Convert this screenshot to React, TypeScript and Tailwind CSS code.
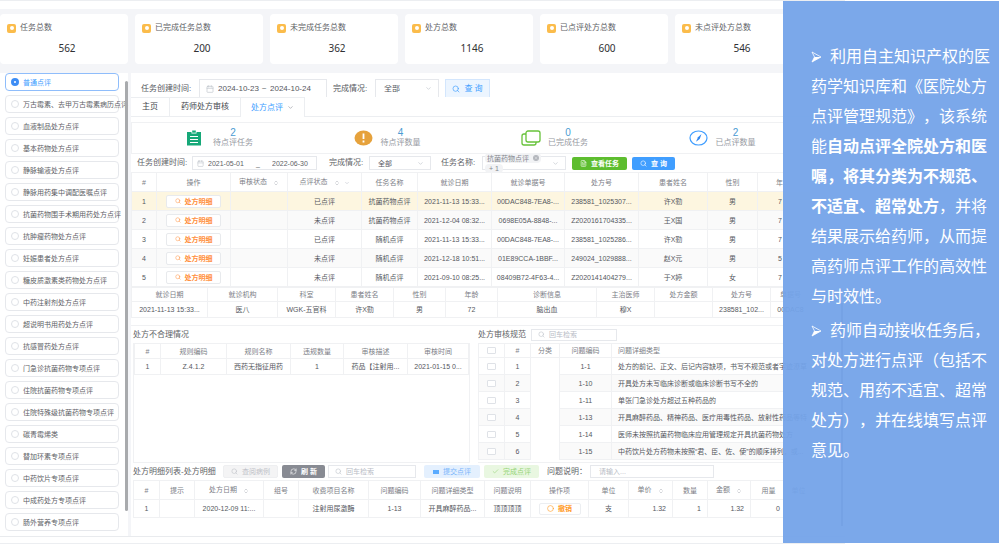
import { useState } from "react";
import type { ReactNode } from "react";
import clsx from "clsx";
import { Calendar, Check, ChevronDown, ChevronsUpDown, Circle, FileText, RefreshCw, Search, X } from "lucide-react";

const totals = [
  { label: "任务总数", value: 562 },
  { label: "已完成任务总数", value: 200 },
  { label: "未完成任务总数", value: 362 },
  { label: "处方总数", value: 1146 },
  { label: "已点评处方总数", value: 600 },
  { label: "未点评处方总数", value: 546 },
];

const reviewTypes = [
  "普通点评",
  "万古霉素、去甲万古霉素病历点评",
  "血液制品处方点评",
  "基本药物处方点评",
  "静脉输液处方点评",
  "静脉用药集中调配医嘱点评",
  "抗菌药物围手术期用药处方点评",
  "抗肿瘤药物处方点评",
  "妊娠患者处方点评",
  "糖皮质激素类药物处方点评",
  "中药注射剂处方点评",
  "超说明书用药处方点评",
  "抗感冒药处方点评",
  "门急诊抗菌药物专项点评",
  "住院抗菌药物专项点评",
  "住院特殊级抗菌药物专项点评",
  "碳青霉烯类",
  "替加环素专项点评",
  "中药饮片专项点评",
  "中成药处方专项点评",
  "肠外营养专项点评",
];

const tasks = [
  ["已点评", "抗菌药物点评", "2021-11-13 15:33...", "00DAC848-7EA8-...", "238581_1025307...", "许X勤", "男", "7"],
  ["未点评", "抗菌药物点评", "2021-12-04 08:32...", "0698E05A-8848-...", "Z2020161704335...", "王X国", "男", "7"],
  ["已点评", "随机点评", "2021-11-13 15:33...", "00DAC848-7EA8-...", "238581_1025286...", "许X勤", "男", "7"],
  ["未点评", "随机点评", "2021-12-18 10:51...", "01E89CCA-1BBF...", "249024_1029888...", "赵X元", "男", "5"],
  ["未点评", "随机点评", "2021-09-10 08:25...", "08409B72-4F63-4...", "Z2020141404279...", "于X婷", "女", "7"],
];

const rules = [
  ["1-1", "处方的前记、正文、后记内容缺项，书写不规范或者字迹潦草"],
  ["1-10", "开具处方未写临床诊断或临床诊断书写不全的"],
  ["1-11", "单张门急诊处方超过五种药品的"],
  ["1-13", "开具麻醉药品、精神药品、医疗用毒性药品、放射性药品等特"],
  ["1-14", "医师未按照抗菌药物临床应用管理规定开具抗菌药物处方"],
  ["1-15", "中药饮片处方药物未按照“君、臣、佐、使”的顺序排列，或..."],
];

const cell = "border-r border-b border-[#f0f1f3] p-0 text-center font-normal whitespace-nowrap overflow-hidden";

type ThProps = { w?: string; h: string; children?: ReactNode; sort?: boolean; filter?: boolean; left?: boolean };

function Th({ w, h, children, sort, filter, left }: ThProps) {
  return (
    <th scope="col" className={clsx(cell, w, h, "text-[#7d8087]", left && "pl-1.5 text-left")}>
      {children}
      {sort && <ChevronsUpDown className="ml-1.5 inline size-[6px] text-[#a9adb5]" />}
      {filter && <ChevronDown className="ml-1 inline size-[6px] text-[#b9bdc6]" />}
    </th>
  );
}

function Td({ h, children, className }: { h: string; children?: ReactNode; className?: string }) {
  return <td className={clsx(cell, h, className)}>{children}</td>;
}

function Table({ label, children }: { label: string; children: ReactNode }) {
  return (
    <table
      aria-label={label}
      className="w-full table-fixed border-separate border-spacing-0 border-t border-l border-[#f0f1f3] text-[7px] leading-none text-[#55585e]"
    >
      {children}
    </table>
  );
}

function SearchBox({ label, className }: { label: string; className: string }) {
  return (
    <label className={clsx("flex items-center gap-1 border border-[#e6e8ec] bg-white px-1.5 text-[#c0c4cc]", className)}>
      <Search className="size-[7px] shrink-0" />
      <input aria-label={label} placeholder="回车检索" className="w-full min-w-0 text-[7px] leading-none outline-none placeholder:text-[#b9bdc6]" />
    </label>
  );
}

function StatusSelect({ id, className }: { id: string; className: string }) {
  return (
    <div className={clsx("relative flex items-center border border-[#e6e8ec] bg-white", className)}>
      <select id={id} className="w-full appearance-none bg-transparent px-2 leading-none text-[#55585e] outline-none">
        <option>全部</option>
      </select>
      <ChevronDown className="pointer-events-none absolute right-1.5 size-[7px] text-[#b9bdc6]" />
    </div>
  );
}

function TotalCards() {
  return (
    <section className="grid grid-cols-6 gap-[7px] bg-[#f4f5f8] pt-[5px] pr-[42px] pb-[9px]">
      {totals.map((t) => (
        <div key={t.label} className="h-[50px] rounded-sm bg-white px-[7px] pt-2">
          <div className="flex items-center gap-1 text-[8px] leading-[12px] text-[#606266]">
            <span className="flex size-[9px] items-center justify-center rounded-[2px] bg-[#fbbc4b]">
              <span className="size-1 rounded-full bg-white" />
            </span>
            {t.label}
          </div>
          <p className="mt-2 pl-1.5 text-center font-['Noto_Sans',sans-serif] text-[10px] leading-[12px] text-[#303133]">{t.value}</p>
        </div>
      ))}
    </section>
  );
}

function Sidebar() {
  const [active, setActive] = useState(0);

  return (
    <aside className="flex w-[128px] shrink-0 bg-white pb-[5px] pl-[5px]">
      <fieldset className="flex w-[120px] flex-col gap-1">
        {reviewTypes.map((name, i) => (
          <label
            key={name}
            className={clsx(
              "flex h-[18px] w-[114px] shrink-0 items-center gap-1 rounded-sm border pl-[5px] text-[7px] leading-none whitespace-nowrap",
              i === active ? "border-[#8fbdfb] text-[#409eff]" : "border-[#e6e8ec] text-[#606266]"
            )}
          >
            <input
              type="radio"
              name="reviewType"
              checked={i === active}
              onChange={() => setActive(i)}
              className="size-[8px] shrink-0 appearance-none rounded-full border border-[#dfe2e7] checked:border-[3px] checked:border-[#3d8df5]"
            />
            {name}
          </label>
        ))}
      </fieldset>
      <div className="relative mt-2 mb-5 w-[3px] rounded-full bg-[#a8aaad]" />
    </aside>
  );
}

function TaskFilter() {
  return (
    <div className="ml-1 flex h-[24px] items-end bg-white pl-1.5 text-[8px] leading-none text-[#55585e]">
      <label htmlFor="from" className="w-[58px] pb-1">任务创建时间:</label>
      <div className="flex h-[18px] w-[128px] items-center border border-b-0 border-[#e6e8ec] pl-1.5">
        <Calendar className="size-[8px] shrink-0 text-[#c0c4cc]" />
        <input id="from" defaultValue="2024-10-23" className="ml-1 w-[42px] outline-none" />
        <span className="w-2 text-center">~</span>
        <input aria-label="结束日期" defaultValue="2024-10-24" className="ml-0.5 w-[44px] outline-none" />
      </div>
      <label htmlFor="status" className="ml-1.5 w-[42px] pb-1">完成情况:</label>
      <StatusSelect id="status" className="h-[18px] w-[64px] border-b-0" />
      <button className="ml-1.5 flex h-[18px] w-[45px] items-center justify-center gap-1 border border-b-0 border-[#d3e6fd] bg-[#ecf5ff] text-[#409eff]">
        <Search className="size-[8px]" />
        查 询
      </button>
    </div>
  );
}

function Tabs() {
  return (
    <nav className="flex h-[20px] bg-white text-[8px] leading-none text-[#44474d]">
      <button className="w-[39px] border-t border-r border-b border-[#eceef1]">主页</button>
      <button className="w-[71px] border-t border-r border-b border-[#eceef1]">药师处方审核</button>
      <button className="flex w-[64px] items-center justify-center gap-1 border-t border-r border-[#eceef1] text-[#409eff]">
        处方点评
        <ChevronDown className="size-[7px] text-[#8b8f97]" />
      </button>
      <div className="flex-1 border-b border-[#eceef1]" />
    </nav>
  );
}

function Stat({ icon, value, label }: { icon: ReactNode; value: number; label: string }) {
  return (
    <div className="flex items-center pl-[54px]">
      <div className="flex w-[27px] shrink-0">{icon}</div>
      <div className="text-center text-[8px] leading-[10px] whitespace-nowrap text-[#96999f]">
        <p className="text-[10px] text-[#4a9bd3]">{value}</p>
        {label}
      </div>
    </div>
  );
}

function Stats() {
  return (
    <section className="mt-[5px] grid h-[32px] grid-cols-4 border border-[#f0f1f3] bg-white">
      <Stat
        value={2}
        label="待点评任务"
        icon={
          <svg width="17" height="16" viewBox="0 0 17 16">
            <path d="M1 2h4.500v1.500h5V2H15v13.500H1z" fill="#16a878" />
            <path d="M6.200 .5h3.600v2.200H6.200z" fill="#16a878" />
            <path d="M4 6.500h8M4 9.500h8M4 12.500h8" stroke="#fff" strokeWidth="1" />
          </svg>
        }
      />
      <Stat
        value={4}
        label="待点评数量"
        icon={
          <svg width="19" height="16" viewBox="0 0 19 16">
            <ellipse cx="9.5" cy="8" rx="9" ry="7.5" fill="#e6a23c" />
            <path d="M9.5 3.5v5.5M9.5 10.5v2" stroke="#fff" strokeWidth="1.8" />
          </svg>
        }
      />
      <Stat
        value={0}
        label="已完成任务"
        icon={
          <svg width="20" height="16" viewBox="0 0 20 16" fill="none" stroke="#67c23a" strokeWidth="1.3">
            <rect x="5" y="1" width="14" height="11" rx="2" />
            <path d="M5 4H3a2 2 0 0 0-2 2v7a2 2 0 0 0 2 2h10a2 2 0 0 0 2-2v-1" />
          </svg>
        }
      />
      <Stat
        value={2}
        label="已点评数量"
        icon={
          <svg width="19" height="16" viewBox="0 0 19 16">
            <ellipse cx="9.5" cy="8" rx="8.5" ry="7" fill="none" stroke="#409eff" strokeWidth="1.2" />
            <path d="M12.5 4l-1.800 5-3.700 2.800L9 7.200z" fill="#2f86f0" />
          </svg>
        }
      />
    </section>
  );
}

function PrescriptionFilter() {
  return (
    <div className="flex h-[18px] items-center bg-white pl-1.5 text-[8px] leading-none text-[#606266]">
      <label htmlFor="start" className="w-[55px]">任务创建时间:</label>
      <div className="flex h-[14px] w-[125px] items-center border border-[#e6e8ec] pl-1 text-[7px]">
        <Calendar className="size-[7px] shrink-0 text-[#c0c4cc]" />
        <input id="start" defaultValue="2021-05-01" className="ml-1 w-[48px] outline-none" />
        <span className="w-4">_</span>
        <input aria-label="截止日期" defaultValue="2022-06-30" className="w-[42px] outline-none" />
      </div>
      <label htmlFor="done" className="ml-3 w-[40px]">完成情况:</label>
      <StatusSelect id="done" className="h-[14px] w-[62px] text-[7px]" />
      <span className="ml-2.5 w-[41px]">任务名称:</span>
      <div className="relative flex h-[14px] w-[84px] items-center border border-[#e6e8ec] text-[7px]">
        <div className="flex flex-col items-start gap-px pl-0.5">
          <span className="flex h-[10px] items-center gap-1 rounded-sm bg-[#f2f3f5] px-0.5 text-[#85888f]">
            抗菌药物点评
            <button aria-label="移除" className="flex size-[6px] items-center justify-center rounded-full bg-[#b4b7bd] text-white">
              <X className="size-1" />
            </button>
          </span>
          <span className="flex h-[9px] items-center rounded-sm bg-[#f2f3f5] px-1 text-[#85888f]">+ 1</span>
        </div>
        <ChevronDown className="absolute right-1.5 size-[7px] text-[#b9bdc6]" />
      </div>
      <button className="ml-1.5 flex h-[13px] w-[55px] items-center justify-center gap-1 rounded-[2px] bg-[#5dbd2f] text-[7px] font-bold text-white">
        <FileText className="size-[7px]" />
        查看任务
      </button>
      <button className="ml-[5px] flex h-[13px] w-[43px] items-center justify-center gap-1 rounded-[2px] bg-[#409eff] text-[7px] font-bold text-white">
        <Search className="size-[7px]" />
        查 询
      </button>
    </div>
  );
}

function TaskTable() {
  const head = "h-[19px]";
  const row = "h-[19px]";

  return (
    <Table label="处方列表">
      <thead>
        <tr>
          <Th h={head} w="w-[25px]">#</Th>
          <Th h={head} w="w-[74px]">操作</Th>
          <Th h={head} w="w-[57px]" sort>审核状态</Th>
          <Th h={head} w="w-[74px]" sort filter>点评状态</Th>
          <Th h={head} w="w-[56px]">任务名称</Th>
          <Th h={head} w="w-[74px]">就诊日期</Th>
          <Th h={head} w="w-[73px]">就诊单据号</Th>
          <Th h={head} w="w-[74px]">处方号</Th>
          <Th h={head} w="w-[69px]">患者姓名</Th>
          <Th h={head} w="w-[50px]">性别</Th>
          <Th h={head} left>
            <span className="pl-3">年</span>
          </Th>
        </tr>
      </thead>
      <tbody>
        {tasks.map((t, i) => (
          <tr key={i} className={clsx(i === 0 ? "bg-[#fdf6e0]" : i % 2 ? "bg-[#fafafa]" : "bg-white")}>
            <Td h={row}>{i + 1}</Td>
            <Td h={row}>
              <button className="inline-flex h-[13px] w-[55px] items-center justify-center gap-1 rounded-[2px] border border-[#e8eaed] bg-white align-middle font-bold text-[#ff9040]">
                <Search className="size-[6px]" />
                处方明细
              </button>
            </Td>
            <Td h={row} />
            {t.map((v, j) => (
              <Td key={j} h={row} className={clsx(j === 7 && "pl-[20px] text-left")}>{v}</Td>
            ))}
          </tr>
        ))}
      </tbody>
    </Table>
  );
}

function PatientTable() {
  const head = "h-[14px]";

  return (
    <Table label="就诊信息">
      <thead>
        <tr>
          <Th h={head} w="w-[76px]">就诊日期</Th>
          <Th h={head} w="w-[70px]">就诊机构</Th>
          <Th h={head} w="w-[58px]">科室</Th>
          <Th h={head} w="w-[58px]">患者姓名</Th>
          <Th h={head} w="w-[52px]">性别</Th>
          <Th h={head} w="w-[52px]">年龄</Th>
          <Th h={head} w="w-[99px]">诊断信息</Th>
          <Th h={head} w="w-[58px]">主治医师</Th>
          <Th h={head} w="w-[58px]">处方金额</Th>
          <Th h={head} w="w-[58px]">处方号</Th>
          <Th h={head}>单据号</Th>
        </tr>
      </thead>
      <tbody>
        <tr>
          {["2021-11-13 15:33...", "医八", "WGK-五官科", "许X勤", "男", "72", "脑出血", "穆X", "", "238581_102...", "00DAC8"].map((v, i) => (
            <Td key={i} h="h-[16px]">{v}</Td>
          ))}
        </tr>
      </tbody>
    </Table>
  );
}

function IssueTable() {
  const head = "h-[15px]";

  return (
    <Table label="处方不合理情况">
      <thead>
        <tr>
          <Th h={head} w="w-[26px]">#</Th>
          <Th h={head} w="w-[66px]">规则编码</Th>
          <Th h={head} w="w-[64px]">规则名称</Th>
          <Th h={head} w="w-[53px]">违规数量</Th>
          <Th h={head} w="w-[64px]">审核描述</Th>
          <Th h={head}>审核时间</Th>
        </tr>
      </thead>
      <tbody>
        <tr>
          {["1", "Z.4.1.2", "西药无指征用药", "1", "药品【注射用...", "2021-01-15 0..."].map((v, i) => (
            <Td key={i} h="h-[16px]">{v}</Td>
          ))}
        </tr>
      </tbody>
    </Table>
  );
}

function RuleTable() {
  const head = "h-[14px]";
  const row = "h-[17px]";
  const box = "block mx-auto h-[7px] w-[9px] appearance-none rounded-[1px] border border-[#dfe2e7] bg-white checked:bg-[#409eff]";

  return (
    <Table label="处方审核规范">
      <thead>
        <tr>
          <Th h={head} w="w-[26px]">
            <input type="checkbox" aria-label="全选" className={box} />
          </Th>
          <Th h={head} w="w-[26px]">#</Th>
          <Th h={head} w="w-[29px]">分类</Th>
          <Th h={head} w="w-[52px]">问题编码</Th>
          <Th h={head} left>问题详细类型</Th>
        </tr>
      </thead>
      <tbody>
        {rules.map(([code, text], i) => (
          <tr key={code} className={i % 2 ? "bg-[#fafafa]" : "bg-white"}>
            <Td h={row}>
              <input type="checkbox" aria-label={code} className={box} />
            </Td>
            <Td h={row}>{i + 1}</Td>
            {i === 0 && <td rowSpan={rules.length} className="border-r border-[#f0f1f3] bg-white" />}
            <Td h={row}>{code}</Td>
            <Td h={row} className="pl-1.5 text-left">{text}</Td>
          </tr>
        ))}
      </tbody>
    </Table>
  );
}

function DetailToolbar() {
  const button = "flex h-[13px] shrink-0 items-center justify-center gap-1 rounded-[2px] text-[7px]";

  return (
    <div className="flex h-[17px] items-center text-[8px] leading-none text-[#606266]">
      <h2 className="w-[90px] whitespace-nowrap">处方明细列表-处方明细</h2>
      <button disabled className={clsx(button, "w-[55px] border border-[#eeeff1] bg-[#f4f4f5] text-[#bfc2c8]")}>
        <Search className="size-[7px]" />
        查阅病例
      </button>
      <button className={clsx(button, "ml-1 w-[43px] bg-[#888b93] font-bold text-white")}>
        <RefreshCw className="size-[7px]" />
        刷 新
      </button>
      <SearchBox label="检索处方明细" className="ml-[3px] h-[13px] w-[88px]" />
      <button className={clsx(button, "ml-2 w-[56px] bg-[#e4f0fe] text-[#79b5fb]")}>
        <span className="h-[4px] w-[6px] bg-[#5aabff]" />
        提交点评
      </button>
      <button className={clsx(button, "ml-1 w-[55px] bg-[#e9f7e1] text-[#95d475]")}>
        <Check className="size-[7px]" />
        完成点评
      </button>
      <label htmlFor="note" className="ml-2 w-[43px]">问题说明：</label>
      <input id="note" placeholder="请输入..." className="h-[13px] w-[124px] border border-[#e6e8ec] bg-white px-2 text-[7px] outline-none placeholder:text-[#b9bdc6]" />
    </div>
  );
}

function DetailTable() {
  const head = "h-[19px]";
  const row = "h-[18px]";

  return (
    <Table label="处方明细列表">
      <thead>
        <tr>
          <Th h={head} w="w-[26px]">#</Th>
          <Th h={head} w="w-[35px]">提示</Th>
          <Th h={head} w="w-[69px]" sort>处方日期</Th>
          <Th h={head} w="w-[35px]">组号</Th>
          <Th h={head} w="w-[70px]">收费项目名称</Th>
          <Th h={head} w="w-[52px]">问题编码</Th>
          <Th h={head} w="w-[64px]">问题详细类型</Th>
          <Th h={head} w="w-[46px]">问题说明</Th>
          <Th h={head} w="w-[58px]">操作项</Th>
          <Th h={head} w="w-[40px]">单位</Th>
          <Th h={head} w="w-[44px]" sort>单价</Th>
          <Th h={head} w="w-[35px]">数量</Th>
          <Th h={head} w="w-[43px]" sort>金额</Th>
          <Th h={head} w="w-[36px]">用量</Th>
          <Th h={head}>单位</Th>
        </tr>
      </thead>
      <tbody>
        <tr>
          {["1", "", "2020-12-09 11:...", "", "注射用尿激酶", "1-13", "开具麻醉药品...", "顶顶顶顶"].map((v, i) => (
            <Td key={i} h={row}>{v}</Td>
          ))}
          <Td h={row}>
            <button className="inline-flex h-[12px] w-[42px] items-center justify-center gap-1 rounded-[2px] border border-[#eceef1] bg-white align-middle font-bold text-[#ff9a1f]">
              <Circle className="size-[7px]" />
              撤销
            </button>
          </Td>
          <Td h={row}>支</Td>
          {["1.32", "1", "1.32", "0"].map((v, i) => (
            <Td key={i} h={row} className="pr-1.5 text-right">{v}</Td>
          ))}
          <Td h={row} />
        </tr>
      </tbody>
    </Table>
  );
}

function Bullet() {
  return (
    <svg width="11" height="12" viewBox="0 0 11 12" className="mr-2 inline-block align-[-1px]">
      <path d="M1 1l9 5-9 5 2.500-5z" fill="none" stroke="#fff" strokeWidth="0.8" />
      <path d="M3.500 6H10L1 11z" fill="#fff" />
    </svg>
  );
}

function Intro() {
  return (
    <aside className="absolute top-px right-px bottom-px w-[216px] bg-[#74a3e9]/95 pt-[41px] pl-[28px] text-[16px] leading-[30px] whitespace-nowrap text-white [text-spacing-trim:space-all]">
      <p>
        <Bullet />
        利用自主知识产权的医
        <br />
        药学知识库和《医院处方
        <br />
        点评管理规范》，该系统
        <br />
        能<strong>自动点评全院处方和医</strong>
        <br />
        <strong>嘱，将其分类为不规范、</strong>
        <br />
        <strong>不适宜、超常处方</strong>，并将
        <br />
        结果展示给药师，从而提
        <br />
        高药师点评工作的高效性
        <br />
        与时效性。
      </p>
      <p className="mt-1">
        <Bullet />
        药师自动接收任务后，
        <br />
        对处方进行点评（包括不
        <br />
        规范、用药不适宜、超常
        <br />
        处方），并在线填写点评
        <br />
        意见。
      </p>
    </aside>
  );
}

export default function App() {
  return (
    <div lang="zh-CN" className="relative min-h-screen overflow-hidden bg-white font-['Liberation_Sans','Noto_Sans_CJK_SC',sans-serif]">
      <div className="mr-[155px] border-t border-b border-[#eceef1]">
        <header className="h-2" />
        <TotalCards />
        <div className="flex border-b border-[#e9ebee] bg-[#f4f5f8]">
          <Sidebar />
          <main className="ml-[3px] flex min-w-0 flex-1 bg-white">
            <div className="min-w-0 flex-1">
              <TaskFilter />
              <Tabs />
              <div className="mr-[8px]">
                <Stats />
                <PrescriptionFilter />
              </div>
              <TaskTable />
              <PatientTable />
              <div className="mt-[7px] border-t border-[#f0f1f3] pl-0.5">
                <div className="flex gap-2">
                  <section className="w-[337px] shrink-0">
                    <h2 className="h-[17px] text-[8px] leading-[17px] text-[#606266]">处方不合理情况</h2>
                    <div className="h-[120px] border-r border-b border-l border-[#f0f1f3]">
                      <IssueTable />
                    </div>
                  </section>
                  <section className="min-w-0 flex-1">
                    <div className="flex h-[17px] items-center gap-[5px] text-[8px] leading-none text-[#606266]">
                      <h2 className="whitespace-nowrap">处方审核规范</h2>
                      <SearchBox label="检索审核规范" className="h-[12px] w-[86px]" />
                    </div>
                    <div className="h-[120px] overflow-hidden border-b border-[#f0f1f3]">
                      <RuleTable />
                    </div>
                  </section>
                </div>
                <DetailToolbar />
                <DetailTable />
              </div>
            </div>
            <div className="mt-[230px] mr-0.5 mb-2.5 ml-[30px] w-[2px] bg-[#8b8f97]" />
          </main>
        </div>
        <footer className="h-1.5" />
      </div>
      <Intro />
    </div>
  );
}
